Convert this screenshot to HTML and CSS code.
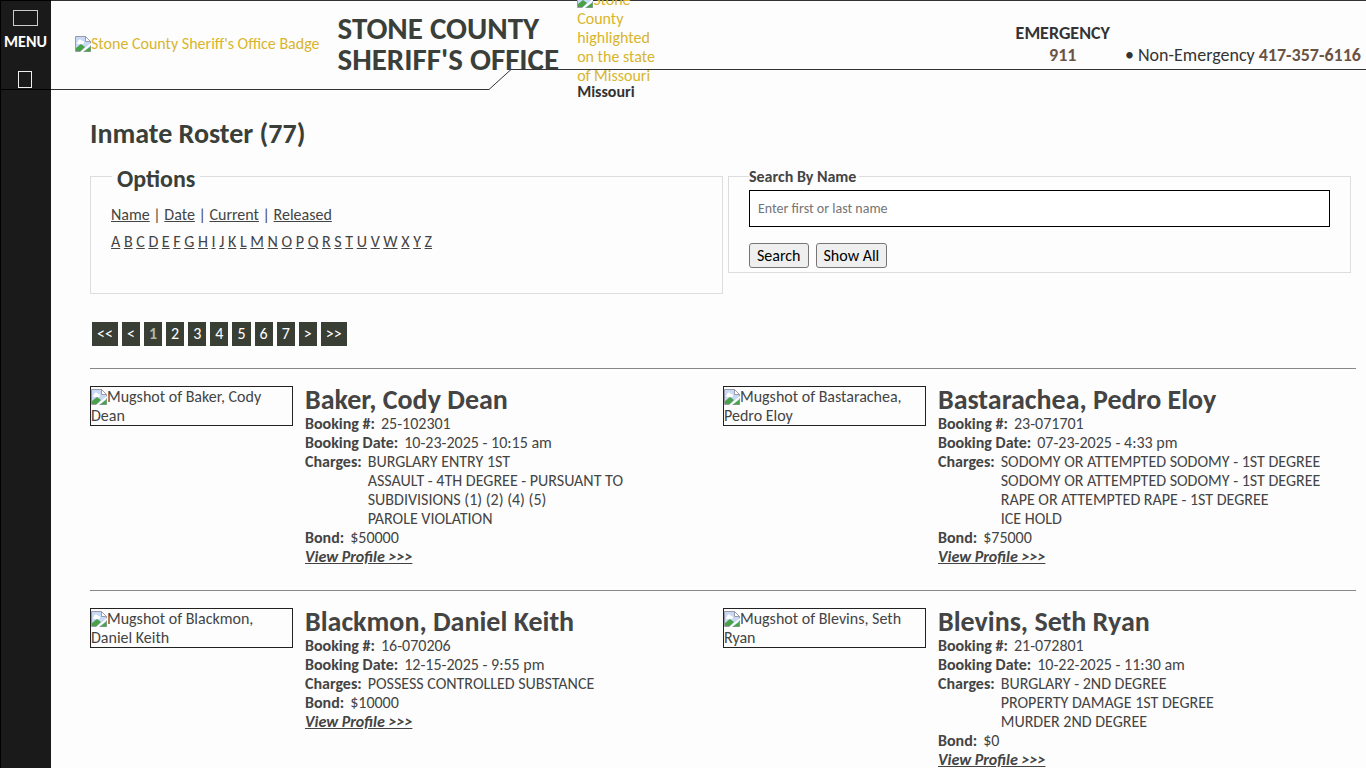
FILE: index.html
```html
<!DOCTYPE html>
<html lang="en">
<head>
    <meta charset="UTF-8">
    <meta name="viewport" content="width=device-width, initial-scale=1.0">
    <title>Inmate Roster - Stone County Sheriff's Office</title>
    <link rel="stylesheet" href="styles.css">
</head>
<body>
    <svg width="0" height="0" class="defs" aria-hidden="true">
        <symbol id="broken" viewBox="0 0 16 16">
            <path d="M.5.5h10l5 5v10H.5z" fill="#c8d9f5" stroke="#9a9aa8"/>
            <path d="M10.5.5v5h5z" fill="#fff" stroke="#9a9aa8"/>
            <path d="M3 6a2 2 0 0 1 4-1 1.500 1.500 0 0 1 1 3H3a1 1 0 0 1 0-2z" fill="#fff"/>
            <path d="M1 15v-3l5-4 4 3-4 4z" fill="#4aa14a"/>
            <path d="M5 16 16 7v2l-8 7z" fill="#fff"/>
            <path d="m9 15.500 6.500-5v5z" fill="#4aa14a"/>
        </symbol>
    </svg>

    <nav class="sidebar">
        <button class="menu-button"><span class="menu-icon"></span>MENU</button>
        <a href="#" class="search-icon" aria-label="Search"></a>
    </nav>

    <div class="page">
        <header>
            <svg class="header-line" aria-hidden="true"><path d="M0 88.500H438L460 68.500H4000"/></svg>
            <a href="#" class="badge"><svg class="broken"><use href="#broken"/></svg>Stone County Sheriff's Office Badge</a>
            <div class="site-title">STONE COUNTY<br>SHERIFF'S OFFICE</div>
            <div class="state">
                <a href="#"><svg class="broken"><use href="#broken"/></svg>Stone County highlighted on the state of Missouri</a>
                <strong>Missouri</strong>
            </div>
            <div class="phones">
                <div class="emergency">EMERGENCY<br><a href="#">911</a></div>
                <div>• Non-Emergency <a href="#">417-357-6116</a></div>
            </div>
        </header>

        <main>
            <h1>Inmate Roster (77)</h1>

            <div class="filters">
                <fieldset class="options">
                    <legend>Options</legend>
                    <p><a href="#">Name</a> | <a href="#">Date</a> | <a href="#">Current</a> | <a href="#">Released</a></p>
                    <p class="letters">
                        <a href="#">A</a> <a href="#">B</a> <a href="#">C</a> <a href="#">D</a> <a href="#">E</a> <a href="#">F</a> <a href="#">G</a> <a href="#">H</a> <a href="#">I</a> <a href="#">J</a> <a href="#">K</a> <a href="#">L</a> <a href="#">M</a> <a href="#">N</a> <a href="#">O</a> <a href="#">P</a> <a href="#">Q</a> <a href="#">R</a> <a href="#">S</a> <a href="#">T</a> <a href="#">U</a> <a href="#">V</a> <a href="#">W</a> <a href="#">X</a> <a href="#">Y</a> <a href="#">Z</a>
                    </p>
                </fieldset>
                <fieldset class="search">
                    <legend><label for="search-name">Search By Name</label></legend>
                    <input type="text" id="search-name" placeholder="Enter first or last name">
                    <div class="buttons">
                        <button>Search</button>
                        <button>Show All</button>
                    </div>
                </fieldset>
            </div>

            <div class="pagination">
                <a href="#" class="wide">&lt;&lt;</a>
                <a href="#">&lt;</a>
                <a href="#" class="current">1</a>
                <a href="#">2</a>
                <a href="#">3</a>
                <a href="#">4</a>
                <a href="#">5</a>
                <a href="#">6</a>
                <a href="#">7</a>
                <a href="#">&gt;</a>
                <a href="#" class="wide">&gt;&gt;</a>
            </div>

            <div class="roster-row">
                <div class="inmate">
                    <div class="mugshot"><svg class="broken"><use href="#broken"/></svg>Mugshot of Baker, Cody Dean</div>
                    <div class="details">
                        <h2>Baker, Cody Dean</h2>
                        <div class="field"><b>Booking #:</b><span>25-102301</span></div>
                        <div class="field"><b>Booking Date:</b><span>10-23-2025 - 10:15 am</span></div>
                        <div class="field"><b>Charges:</b><span>BURGLARY ENTRY 1ST<br>ASSAULT - 4TH DEGREE - PURSUANT TO SUBDIVISIONS (1) (2) (4) (5)<br>PAROLE VIOLATION</span></div>
                        <div class="field"><b>Bond:</b><span>$50000</span></div>
                        <a href="#" class="profile">View Profile &gt;&gt;&gt;</a>
                    </div>
                </div>
                <div class="inmate">
                    <div class="mugshot"><svg class="broken"><use href="#broken"/></svg>Mugshot of Bastarachea, Pedro Eloy</div>
                    <div class="details">
                        <h2>Bastarachea, Pedro Eloy</h2>
                        <div class="field"><b>Booking #:</b><span>23-071701</span></div>
                        <div class="field"><b>Booking Date:</b><span>07-23-2025 - 4:33 pm</span></div>
                        <div class="field"><b>Charges:</b><span>SODOMY OR ATTEMPTED SODOMY - 1ST DEGREE<br>SODOMY OR ATTEMPTED SODOMY - 1ST DEGREE<br>RAPE OR ATTEMPTED RAPE - 1ST DEGREE<br>ICE HOLD</span></div>
                        <div class="field"><b>Bond:</b><span>$75000</span></div>
                        <a href="#" class="profile">View Profile &gt;&gt;&gt;</a>
                    </div>
                </div>
            </div>

            <div class="roster-row">
                <div class="inmate">
                    <div class="mugshot"><svg class="broken"><use href="#broken"/></svg>Mugshot of Blackmon, Daniel Keith</div>
                    <div class="details">
                        <h2>Blackmon, Daniel Keith</h2>
                        <div class="field"><b>Booking #:</b><span>16-070206</span></div>
                        <div class="field"><b>Booking Date:</b><span>12-15-2025 - 9:55 pm</span></div>
                        <div class="field"><b>Charges:</b><span>POSSESS CONTROLLED SUBSTANCE</span></div>
                        <div class="field"><b>Bond:</b><span>$10000</span></div>
                        <a href="#" class="profile">View Profile &gt;&gt;&gt;</a>
                    </div>
                </div>
                <div class="inmate">
                    <div class="mugshot"><svg class="broken"><use href="#broken"/></svg>Mugshot of Blevins, Seth Ryan</div>
                    <div class="details">
                        <h2>Blevins, Seth Ryan</h2>
                        <div class="field"><b>Booking #:</b><span>21-072801</span></div>
                        <div class="field"><b>Booking Date:</b><span>10-22-2025 - 11:30 am</span></div>
                        <div class="field"><b>Charges:</b><span>BURGLARY - 2ND DEGREE<br>PROPERTY DAMAGE 1ST DEGREE<br>MURDER 2ND DEGREE</span></div>
                        <div class="field"><b>Bond:</b><span>$0</span></div>
                        <a href="#" class="profile">View Profile &gt;&gt;&gt;</a>
                    </div>
                </div>
            </div>
        </main>
    </div>
</body>
</html>
```
FILE: styles.css
```css
* {
    box-sizing: border-box;
}
body {
    display: flex;
    margin: 0;
    min-height: 100vh;
    font-family: Carlito, Calibri, Lato, sans-serif;
    font-size: 16px;
    line-height: 19px;
    color: #444;
    background-color: #fdfdfd;
}
a {
    color: #444;
}
h1, h2, p {
    margin: 0;
}
button, input {
    font-family: inherit;
}
.defs {
    position: absolute;
}
.broken {
    width: 16px;
    height: 16px;
    vertical-align: -3px;
}

/* sidebar */
.sidebar {
    flex: 0 0 51px;
    background-color: #1a1a1a;
    border-left: 1px solid #000;
    border-top: 1px solid #000;
}
.menu-button {
    display: flex;
    flex-direction: column;
    align-items: center;
    gap: 7px;
    width: 100%;
    padding: 9px 1px 0 0;
    border: 0;
    background: none;
    color: #fff;
    font-size: 16px;
    font-weight: bold;
    line-height: 18px;
}
.menu-icon {
    width: 25px;
    height: 16px;
    border: 1px solid #ccc;
}
.search-icon {
    display: block;
    width: 14px;
    height: 17px;
    margin: 20px auto 0 17px;
    border: 1px solid #eee;
}
.sidebar::after {
    content: "";
    display: block;
    margin-top: 1px;
    border-top: 1px solid #000;
}

/* header */
.page {
    flex: 1;
    min-width: 0;
}
header {
    position: relative;
    display: flex;
    align-items: center;
    height: 90px;
    padding: 0 5px 4px 24px;
    border-top: 1px solid #333;
}
.header-line {
    position: absolute;
    left: 0;
    top: 0;
    width: 100%;
    height: 100%;
    fill: none;
    stroke: #333;
}
.badge, .state a {
    color: #d8b52c;
    text-decoration: none;
}
.site-title {
    margin-left: 18px;
    font-size: 31px;
    font-weight: bold;
    line-height: 31px;
    color: #3a3f3a;
}
.state {
    width: 82px;
    margin-left: 18px;
}
.state strong {
    display: block;
    line-height: 13px;
    color: #333;
}
.phones {
    display: flex;
    align-items: flex-end;
    gap: 15px;
    margin-left: auto;
    font-size: 18px;
    line-height: 22px;
    color: #333;
}
.phones a {
    color: #6b5344;
    font-weight: bold;
    text-decoration: none;
}
.emergency {
    font-weight: bold;
    text-align: center;
}

/* content */
main {
    padding: 28px 10px 0 39px;
}
h1 {
    font-size: 28px;
    line-height: 32px;
    color: #3a3f3a;
}
.filters {
    display: grid;
    grid-template-columns: 1fr 1fr;
    align-items: start;
    margin-top: 17px;
}
fieldset {
    min-width: 0;
    margin: 0;
    border: 1px solid #ddd;
}
.options {
    height: 127px;
    padding: 20px 20px 10px;
}
.options legend {
    padding: 6px 5px 0;
    margin-left: 1px;
    font-size: 24px;
    font-weight: bold;
    line-height: 12px;
    color: #3a3f3a;
}
.options p {
    margin-bottom: 8px;
}
.search {
    margin: 0 5px;
    padding: 4px 20px;
}
.search legend {
    padding: 0 3px 0 0;
    font-weight: bold;
}
.search input {
    display: block;
    width: 100%;
    height: 37px;
    padding: 0 8px;
    border: 1px solid #000;
    font-size: 14px;
}
.buttons {
    display: flex;
    gap: 7px;
    margin-top: 16px;
}
.buttons button {
    height: 25px;
    padding: 0 7px;
    border: 1px solid #767676;
    border-radius: 3px;
    background-color: #efefef;
    font-size: 16px;
}
.pagination {
    display: flex;
    gap: 4px;
    margin: 28px 0 22px 2px;
}
.pagination a {
    min-width: 18px;
    padding: 0 5px;
    background-color: #3a3f35;
    color: #fff;
    line-height: 24px;
    text-align: center;
    text-decoration: none;
}
.pagination .wide {
    min-width: 26px;
}
.pagination .current {
    color: #b5b5a8;
    font-weight: bold;
}

/* roster */
.roster-row {
    display: grid;
    grid-template-columns: 1fr 1fr;
    padding: 17px 0 24px;
    border-top: 1px solid #888;
}
.inmate {
    display: flex;
    align-items: flex-start;
    gap: 12px;
    padding-right: 20px;
}
.mugshot {
    flex: 0 0 203px;
    padding-right: 10px;
    border: 1px solid #222;
}
.details h2 {
    font-size: 28px;
    line-height: 28px;
}
.field {
    display: flex;
    gap: 6px;
}
.field b {
    white-space: nowrap;
}
.profile {
    font-style: italic;
    font-weight: bold;
}
```
